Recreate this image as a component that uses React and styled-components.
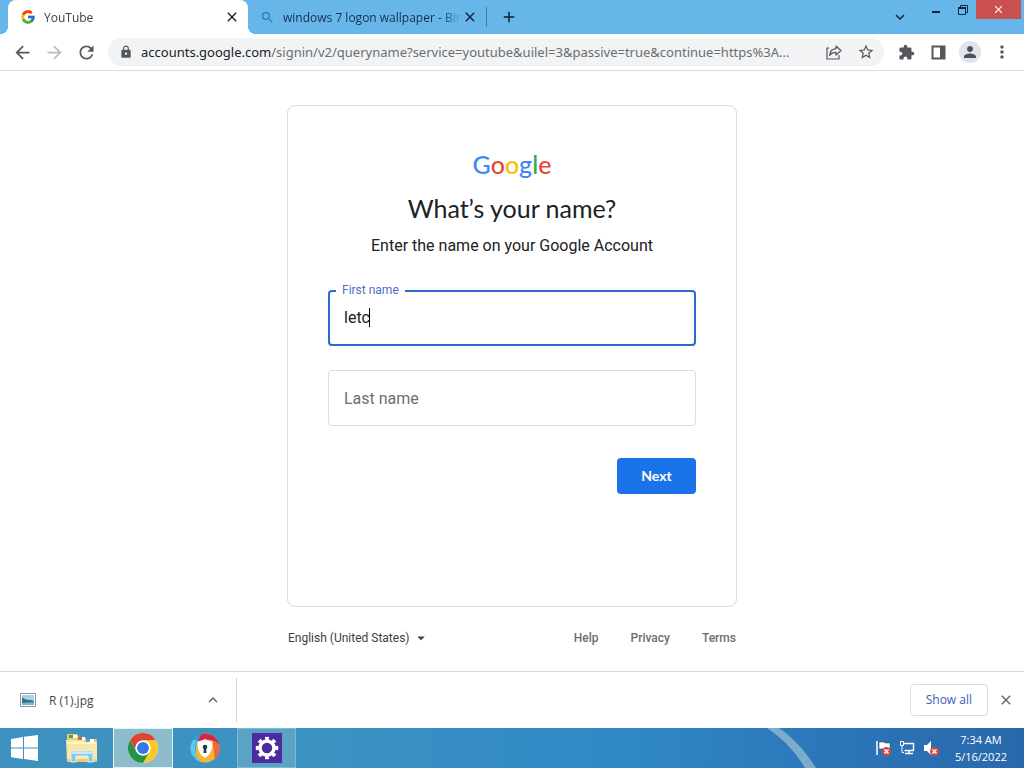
import React from "react";
import styled, { createGlobalStyle } from "styled-components";
import { FcGoogle } from "react-icons/fc";
import {
  MdAdd,
  MdArrowBack,
  MdArrowDropDown,
  MdArrowForward,
  MdClose,
  MdExpandLess,
  MdExpandMore,
  MdExtension,
  MdLock,
  MdMoreVert,
  MdPerson,
  MdRefresh,
  MdSearch,
  MdStarBorder
} from "react-icons/md";

const uiFont = `"Segoe UI", "Open Sans", "Noto Sans", sans-serif`;
const pageFont = `Roboto, "Liberation Sans", sans-serif`;

const GlobalStyle = createGlobalStyle`
  * {
    box-sizing: border-box;
  }
  body {
    margin: 0;
    background: #fff;
    font-family: ${uiFont};
  }
  button, input, select {
    margin: 0;
    padding: 0;
    border: 0;
    background: none;
    font: inherit;
    color: inherit;
  }
  svg {
    display: block;
    flex: none;
  }
`;

const Desktop = styled.div`
  display: flex;
  flex-direction: column;
  min-height: 100vh;
`;

/* tab strip */

const TabStrip = styled.header`
  display: flex;
  height: 34px;
  padding-left: 8px;
  background: #67b6e9;
  color: #16324a;
`;

const Tab = styled.div`
  position: relative;
  display: flex;
  align-items: center;
  width: ${p => (p.$active ? "240px" : "238px")};
  padding: 0 8px 0 12px;
  font-size: 12px;
  color: ${p => (p.$active ? "#3c4043" : "#15304f")};
  background: ${p => (p.$active ? "#fff" : "transparent")};
  border-radius: 8px 8px 0 0;

  &::before,
  &::after {
    content: "";
    display: ${p => (p.$active ? "block" : "none")};
    position: absolute;
    bottom: 0;
    width: 8px;
    height: 8px;
  }
  &::before {
    left: -8px;
    background: radial-gradient(circle at 0 0, transparent 8px, #fff 8px);
  }
  &::after {
    right: -8px;
    background: radial-gradient(circle at 100% 0, transparent 8px, #fff 8px);
  }
`;

const TabTitle = styled.span`
  flex: 1;
  margin-left: 8px;
  overflow: hidden;
  white-space: nowrap;
  mask-image: linear-gradient(to left, transparent, #000 20px);
`;

const TabButton = styled.button`
  display: flex;
  align-items: center;
  color: #14202c;
  stroke: currentColor;
`;

const TabDivider = styled.span`
  width: 1px;
  height: 20px;
  margin: 7px 13px 0 0;
  background: #3b7da9;
`;

const WindowControls = styled.div`
  display: flex;
  align-items: flex-start;
  margin-left: auto;
  padding-right: 3px;
`;

const WindowButton = styled.button`
  display: flex;
  align-items: center;
  justify-content: center;
  width: ${p => (p.$close ? "45px" : "26px")};
  height: 19px;
  background: ${p => (p.$close ? "#c9504e" : "transparent")};
  color: ${p => (p.$close ? "#fff" : "#10283d")};
`;

const TabSearch = styled(WindowButton)`
  width: 24px;
  height: 34px;
  margin-right: 12px;
`;

/* toolbar */

const Toolbar = styled.nav`
  display: flex;
  align-items: center;
  height: 37px;
  padding: 0 6px;
  border-bottom: 1px solid #dcdee1;
  background: #fff;
`;

const ToolButton = styled.button`
  display: flex;
  flex: none;
  align-items: center;
  justify-content: center;
  width: 32px;
  height: 28px;
  color: ${p => (p.$muted ? "#b9bcbf" : "#54575b")};
`;

const AddressBar = styled.div`
  display: flex;
  flex: 1;
  align-items: center;
  min-width: 0;
  height: 28px;
  margin: 0 6px;
  padding: 0 2px 0 11px;
  gap: 8px;
  border-radius: 14px;
  background: #f1f3f4;
  color: #54575b;
`;

const Url = styled.div`
  flex: 1;
  overflow: hidden;
  font-family: "Noto Sans", sans-serif;
  font-size: 13px;
  white-space: nowrap;
  color: #6a6e73;

  b {
    font-weight: 400;
    color: #202124;
  }
`;

const AddressActions = styled.div`
  display: flex;
`;

const Avatar = styled.span`
  display: flex;
  align-items: center;
  justify-content: center;
  width: 22px;
  height: 22px;
  border-radius: 50%;
  background: #dfe3ea;
  color: #47505c;
`;

/* sign in page */

const Page = styled.main`
  display: flex;
  flex: 1;
  flex-direction: column;
  align-items: center;
  padding-top: 34px;
  font-family: ${pageFont};
`;

const Card = styled.form`
  width: 100%;
  max-width: 450px;
  min-height: 502px;
  padding: 46px 40px 36px;
  border: 1px solid #dadce0;
  border-radius: 8px;
  text-align: center;
`;

const Wordmark = styled.div`
  font-family: Lato, sans-serif;
  font-size: 25px;
  font-weight: 500;
  line-height: 24px;
`;

const Letter = styled.span`
  color: ${p => p.$color};
`;

const Title = styled.h1`
  margin: 16px 0 10px;
  font-family: "Google Sans", Lato, sans-serif;
  font-size: 25px;
  font-weight: 400;
  line-height: 32px;
  color: #202124;
`;

const Subtitle = styled.p`
  margin: 0 0 32px;
  font-size: 16px;
  line-height: 24px;
  color: #202124;
`;

const FieldBox = styled.div`
  position: relative;
  display: flex;
  align-items: center;
  height: 56px;
  margin-bottom: 24px;
  padding: 0 ${p => (p.$focused ? "14px" : "15px")} 2px;
  border: ${p => (p.$focused ? "2px solid #2b6bd0" : "1px solid #dadce0")};
  border-radius: 4px;
  font-size: 16px;
  color: #202124;
`;

const FieldInput = styled.input`
  flex: ${p => (p.$focused ? "none" : "1")};
  field-sizing: ${p => (p.$focused ? "content" : "fixed")};
  min-width: 1px;
  height: 28px;
  outline: none;
`;

const FieldLabel = styled.label`
  position: absolute;
  top: ${p => (p.$focused ? "-10px" : "16px")};
  left: ${p => (p.$focused ? "6px" : "9px")};
  padding: 0 6px;
  background: #fff;
  font-size: ${p => (p.$focused ? "12px" : "16px")};
  line-height: ${p => (p.$focused ? "16px" : "24px")};
  color: ${p => (p.$focused ? "#4a6fc4" : "#6b6f74")};
`;

const TextCursor = styled.span`
  width: 1px;
  height: 19px;
  margin-left: -1px;
  background: #000;
`;

const Actions = styled.div`
  display: flex;
  justify-content: flex-end;
  padding-top: 8px;
`;

const NextButton = styled.button`
  min-width: 79px;
  height: 36px;
  padding: 0 16px 2px;
  border-radius: 4px;
  background: #1a73e8;
  color: #fff;
  font-family: "Google Sans", Lato, sans-serif;
  font-size: 14px;
  font-weight: 700;
`;

const PageFooter = styled.footer`
  display: flex;
  align-items: center;
  justify-content: space-between;
  width: 100%;
  max-width: 448px;
  padding: 19px 0 21px;
  font-size: 12px;
  line-height: 24px;
`;

const Language = styled.label`
  display: flex;
  align-items: center;
  gap: 2px;
  color: #3c4043;
`;

const LanguageSelect = styled.select`
  appearance: none;
  height: 24px;
`;

const FooterLinks = styled.div`
  display: flex;
  gap: 32px;

  a {
    color: #6a6d71;
    font-weight: 500;
    text-decoration: none;
  }
`;

/* downloads shelf */

const Shelf = styled.section`
  display: flex;
  align-items: center;
  height: 57px;
  padding-right: 10px;
  border-top: 1px solid #d5d7da;
  background: #fff;
`;

const Download = styled.div`
  display: flex;
  align-items: center;
  width: 237px;
  height: 44px;
  padding: 0 14px 0 20px;
  gap: 13px;
  border-right: 1px solid #cfd1d4;
  font-size: 12px;
  color: #45484c;

  span {
    flex: 1;
  }
`;

const ShelfButton = styled.button`
  display: flex;
  color: #5f6368;
  stroke: currentColor;
`;

const ShowAll = styled.button`
  height: 32px;
  margin: 0 10px 0 auto;
  padding: 0 15px 2px;
  border: 1px solid #dadce0;
  border-radius: 4px;
  font-size: 12px;
  font-weight: 500;
  color: #3a62b5;
`;

/* taskbar */

const Taskbar = styled.footer`
  position: relative;
  display: flex;
  align-items: center;
  height: 40px;
  background: linear-gradient(to right, #3d92bf, #3c92c2 30%, #3089c6 60%, #2c77ba 80%, #2868ab);
`;

const Streak = styled.svg`
  position: absolute;
  top: 0;
  right: 204px;
`;

const TaskButton = styled.button`
  display: flex;
  align-items: center;
  justify-content: center;
  width: ${p => p.$width};
  height: 40px;
  border: ${p => (p.$state ? "1px solid" : "0")};
  border-color: ${p => (p.$state === "active" ? "#e4f1f6" : "#7ebad5")};
  background: ${p => (p.$state === "active" ? "#8dbccb" : p.$state === "open" ? "#5ba3c5" : "transparent")};
`;

const Tray = styled.div`
  display: flex;
  align-items: center;
  margin-left: auto;
  padding-right: 17px;
  gap: 8px;
`;

const Clock = styled.time`
  margin-left: 8px;
  font-size: 11px;
  line-height: 17px;
  text-align: center;
  color: #fff;
`;

const wordmark = [
  ["G", "#4285f4"],
  ["o", "#ea4335"],
  ["o", "#fbbc05"],
  ["g", "#4285f4"],
  ["l", "#34a853"],
  ["e", "#ea4335"]
];

const ShareIcon = () => (
  <svg width="16" height="16" viewBox="0 0 16 16" fill="none" stroke="currentColor" strokeWidth="1.2">
    <path d="M3 4H1v11h12v-4" />
    <path d="M10 2l5 4.500-5 4.500V8.300C7 8.300 5 9.200 3.600 11.500 4 7.500 6.500 5 10 4.700z" strokeLinejoin="round" />
  </svg>
);

const SidePanelIcon = () => (
  <svg width="15" height="15" viewBox="0 0 15 15">
    <path d="M1.500 1.500h12v12h-12z" fill="none" stroke="currentColor" strokeWidth="2" />
    <path d="M9 1h5v13H9z" fill="currentColor" />
  </svg>
);

const RestoreIcon = () => (
  <svg width="12" height="12" viewBox="0 0 12 12" fill="none" stroke="currentColor">
    <path d="M3.500 3V1.500h7v7H9" />
    <path d="M1.500 3.500h7v7h-7z" />
    <path d="M1 4h8" strokeWidth="2" />
  </svg>
);

const PictureIcon = () => (
  <svg width="16" height="14" viewBox="0 0 16 14">
    <path d="M.5.5h15v13H.5z" fill="#fff" stroke="#8998a2" />
    <path d="M2 2h12v10H2z" fill="#a4d5e6" />
    <path d="M2 4c4 4 7 2 12 4v2H2z" fill="#35727d" />
    <path d="M2 10l12-1v3H2z" fill="#7fb3c9" />
  </svg>
);

const WindowsIcon = () => (
  <svg width="28" height="26" viewBox="0 0 28 26" fill="#fff">
    <path d="M0 4l12-2v10.500H0zM13 1.800L27 0v12.500H13zM0 13.500h12V24L0 22.200zM13 13.500h14V26l-14-1.900z" />
  </svg>
);

const FolderIcon = () => (
  <svg width="32" height="30" viewBox="0 0 32 30">
    <path d="M1 2q0-1 1-1h9l2 3h6l1 2h9q2 0 2 2v20H1z" fill="#eacb78" />
    <path d="M3 2h4v3H3z" fill="#4c9d4b" />
    <path d="M7 2h4v3H7z" fill="#fff" />
    <path d="M12 4h4v3h-4z" fill="#cf6346" />
    <path d="M16 4h3v3h-3z" fill="#fff" />
    <path d="M20 6h4v3h-4z" fill="#5c9fd0" />
    <path d="M24 6h4v3h-4z" fill="#fff" />
    <path d="M0 7h17l2 2h12v20H1z" fill="#fae7a5" />
    <path d="M1 10h29" stroke="#fff6ca" strokeWidth="2" />
    <path d="M1 26h30v3H1z" fill="#edcb70" />
    <path d="M5 18h22v11h-5v-6H10v6H5z" fill="#8ac6e8" stroke="#e1f4fb" />
    <path d="M6 20h20" stroke="#c9eafa" strokeWidth="2" />
  </svg>
);

const ChromeIcon = () => (
  <svg width="30" height="30" viewBox="0 0 48 48">
    <circle cx="24" cy="24" r="24" fill="#fff" />
    <path d="M3.200 12A24 24 0 0 1 44.800 12H24A12 12 0 0 0 13.600 30z" fill="#df4433" />
    <path d="M44.800 12A24 24 0 0 1 24 48l10.400-18A12 12 0 0 0 24 12z" fill="#fbc827" />
    <path d="M24 48A24 24 0 0 1 3.200 12l10.400 18a12 12 0 0 0 20.800 0z" fill="#269447" />
    <circle cx="24" cy="24" r="12" fill="#fff" />
    <circle cx="24" cy="24" r="9.500" fill="#3478e5" />
  </svg>
);

const SecureBrowserIcon = () => (
  <svg width="30" height="30" viewBox="0 0 30 30">
    <circle cx="15" cy="15" r="14.500" fill="#f7b535" />
    <path d="M8 2A15 15 0 0 1 29.500 13C27 8 20 5 8 8z" fill="#d72445" />
    <path d="M29.500 13A15 15 0 0 1 25 26c-2-5 0-12-4-19 4 1 7 3 8.500 6z" fill="#ef683c" />
    <path d="M12 .800A14.500 14.500 0 0 0 8 27.800C4 20 5 10 12 .800z" fill="#2b9be2" />
    <path d="M3 7a14.500 14.500 0 0 0 8 22C6 24 3 18 7 7z" fill="#53cbed" />
    <path d="M15 6c3 2 5 2.500 7.500 2.500C23 16 20 22 15 25 10 22 7 16 7.500 8.500 10 8.500 12 8 15 6z" fill="#fff" />
    <circle cx="15" cy="14" r="2.300" fill="#243a49" />
    <path d="M14 14h2l.5 6h-3z" fill="#243a49" />
  </svg>
);

// ring plus eight teeth cut from a dashed outer circle
const GearIcon = () => (
  <svg width="30" height="30" viewBox="0 0 30 30" fill="none" stroke="#fff">
    <path d="M0 0h30v30H0z" fill="#4c2ba0" stroke="none" />
    <circle cx="15" cy="15" r="7" strokeWidth="3.500" />
    <circle
      cx="15"
      cy="15"
      r="9.500"
      strokeWidth="3.500"
      pathLength="16"
      strokeDasharray="1 1"
      strokeDashoffset=".5"
    />
  </svg>
);

const ErrorBadge = () => (
  <g>
    <circle cx="11.500" cy="11.500" r="4.500" fill="#d6473f" />
    <path d="M9.500 9.500l4 4M13.500 9.500l-4 4" stroke="#fff" strokeWidth="1.500" />
  </g>
);

const FlagIcon = () => (
  <svg width="16" height="16" viewBox="0 0 16 16">
    <path d="M2 1v14" stroke="#fff" strokeWidth="1.500" />
    <path d="M4 2h5l1 1h5v7H9L8 9H4z" fill="#fff" stroke="#173f69" strokeWidth=".5" />
    <ErrorBadge />
  </svg>
);

const NetworkIcon = () => (
  <svg width="16" height="16" viewBox="0 0 16 16" fill="none" stroke="#fff">
    <path d="M5 3.500h9.500v7H5.500M10 11v2.500M6 13.500h8" strokeWidth="1.400" />
    <path d="M1.500 1.500h3v4h-3zM3 6v6.500h2" />
  </svg>
);

const SpeakerIcon = () => (
  <svg width="16" height="16" viewBox="0 0 16 16">
    <path d="M1 5h3l4-4v14l-4-4H1z" fill="#fff" />
    <ErrorBadge />
  </svg>
);

const Field = ({ id, label, value, focused }) => (
  <FieldBox $focused={focused}>
    <FieldInput id={id} type="text" defaultValue={value} $focused={focused} />
    {focused && <TextCursor />}
    <FieldLabel htmlFor={id} $focused={focused}>
      {label}
    </FieldLabel>
  </FieldBox>
);

const BrowserHeader = () => (
  <>
    <TabStrip>
      <Tab $active>
        <FcGoogle size={16} />
        <TabTitle>YouTube</TabTitle>
        <TabButton aria-label="Close tab">
          <MdClose size={16} />
        </TabButton>
      </Tab>
      <Tab>
        <MdSearch size={15} color="#2d78b5" />
        <TabTitle>windows 7 logon wallpaper - Bing</TabTitle>
        <TabButton aria-label="Close tab">
          <MdClose size={16} />
        </TabButton>
      </Tab>
      <TabDivider />
      <TabButton aria-label="New tab">
        <MdAdd size={18} />
      </TabButton>
      <WindowControls>
        <TabSearch aria-label="Search tabs">
          <MdExpandMore size={18} />
        </TabSearch>
        <WindowButton aria-label="Minimize">
          <svg width="10" height="10" viewBox="0 0 10 10">
            <path d="M0 6h8v2H0z" fill="currentColor" />
          </svg>
        </WindowButton>
        <WindowButton aria-label="Restore">
          <RestoreIcon />
        </WindowButton>
        <WindowButton $close aria-label="Close">
          <MdClose size={13} />
        </WindowButton>
      </WindowControls>
    </TabStrip>
    <Toolbar>
      <ToolButton aria-label="Back">
        <MdArrowBack size={21} />
      </ToolButton>
      <ToolButton $muted aria-label="Forward">
        <MdArrowForward size={21} />
      </ToolButton>
      <ToolButton aria-label="Reload">
        <MdRefresh size={21} />
      </ToolButton>
      <AddressBar>
        <MdLock size={14} />
        <Url>
          <b>accounts.google.com</b>
          /signin/v2/queryname?service=youtube&amp;uilel=3&amp;passive=true&amp;continue=https%3A...
        </Url>
        <AddressActions>
          <ToolButton aria-label="Share">
            <ShareIcon />
          </ToolButton>
          <ToolButton aria-label="Bookmark">
            <MdStarBorder size={18} />
          </ToolButton>
        </AddressActions>
      </AddressBar>
      <ToolButton aria-label="Extensions">
        <MdExtension size={17} />
      </ToolButton>
      <ToolButton aria-label="Side panel">
        <SidePanelIcon />
      </ToolButton>
      <ToolButton aria-label="Profile">
        <Avatar>
          <MdPerson size={18} />
        </Avatar>
      </ToolButton>
      <ToolButton aria-label="Menu">
        <MdMoreVert size={20} />
      </ToolButton>
    </Toolbar>
  </>
);

const SignIn = () => (
  <Page>
    <Card onSubmit={e => e.preventDefault()}>
      <Wordmark>
        {wordmark.map(([letter, color], i) => (
          <Letter key={i} $color={color}>
            {letter}
          </Letter>
        ))}
      </Wordmark>
      <Title>What’s your name?</Title>
      <Subtitle>Enter the name on your Google Account</Subtitle>
      <Field id="firstName" label="First name" value="letc" focused />
      <Field id="lastName" label="Last name" />
      <Actions>
        <NextButton type="submit">Next</NextButton>
      </Actions>
    </Card>
    <PageFooter>
      <Language>
        <LanguageSelect aria-label="Language">
          <option>English (United States)</option>
        </LanguageSelect>
        <MdArrowDropDown size={18} />
      </Language>
      <FooterLinks>
        <a href="#help">Help</a>
        <a href="#privacy">Privacy</a>
        <a href="#terms">Terms</a>
      </FooterLinks>
    </PageFooter>
  </Page>
);

const DownloadShelf = () => (
  <Shelf>
    <Download>
      <PictureIcon />
      <span>R (1).jpg</span>
      <ShelfButton aria-label="Download options">
        <MdExpandLess size={18} />
      </ShelfButton>
    </Download>
    <ShowAll>Show all</ShowAll>
    <ShelfButton aria-label="Close downloads">
      <MdClose size={16} />
    </ShelfButton>
  </Shelf>
);

const DesktopTaskbar = () => (
  <Taskbar>
    <Streak width="54" height="40" viewBox="0 0 54 40">
      <path d="M1 0C14 9 28 21 39 40h11C39 22 25 8 13 0z" fill="#8fb9d0" opacity=".8" />
    </Streak>
    <TaskButton $width="50px" aria-label="Start">
      <WindowsIcon />
    </TaskButton>
    <TaskButton $width="63px" aria-label="File Explorer">
      <FolderIcon />
    </TaskButton>
    <TaskButton $width="60px" $state="active" aria-label="Chrome">
      <ChromeIcon />
    </TaskButton>
    <TaskButton $width="64px" aria-label="Secure Browser">
      <SecureBrowserIcon />
    </TaskButton>
    <TaskButton $width="59px" $state="open" aria-label="Settings">
      <GearIcon />
    </TaskButton>
    <Tray>
      <FlagIcon />
      <NetworkIcon />
      <SpeakerIcon />
      <Clock>
        7:34 AM
        <br />
        5/16/2022
      </Clock>
    </Tray>
  </Taskbar>
);

export default function App() {
  return (
    <Desktop>
      <GlobalStyle />
      <BrowserHeader />
      <SignIn />
      <DownloadShelf />
      <DesktopTaskbar />
    </Desktop>
  );
}
